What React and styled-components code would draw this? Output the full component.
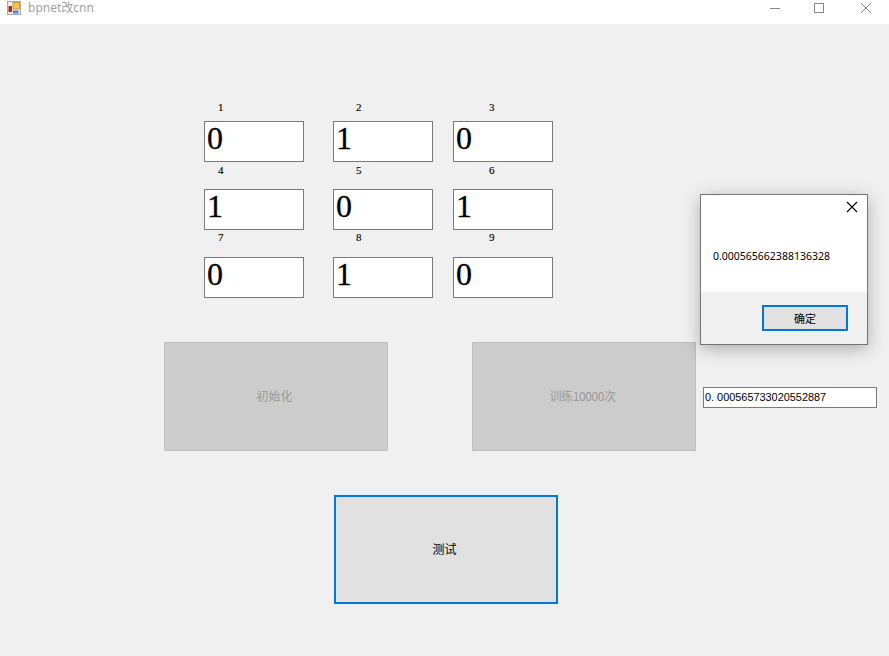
import React from "react";
import styled, { createGlobalStyle } from "styled-components";

const Global = createGlobalStyle`
  html, body { margin: 0; padding: 0; background: #f0f0f0; }
  #root { width: 889px; height: 656px; overflow: hidden; }
`;

const cjk = `"Noto Sans CJK SC", "Liberation Sans", sans-serif`;

const Window = styled.div`
  position: relative;
  width: 889px;
  height: 656px;
  background: #f0f0f0;
  display: flex;
  flex-direction: column;
`;

const TitleBar = styled.header`
  height: 24px;
  flex: none;
  background: #fff;
  display: flex;
  align-items: flex-start;
  padding-left: 7px;
  box-sizing: border-box;
`;

const TitleText = styled.span`
  margin-left: 7px;
  font: 12px/16px "Noto Sans", "Noto Sans CJK SC", sans-serif;
  color: #a3a3a3;
`;

const WinControls = styled.div`
  margin-left: auto;
  display: flex;
  padding: 2px 17px 0 0;
  gap: 35px;
`;

const MinimizeIcon = styled.svg`
  margin-right: -3px;
`;

const Client = styled.main`
  flex: 1;
  display: flex;
  flex-direction: column;
  padding-top: 70px;
`;

const NumGrid = styled.div`
  display: grid;
  grid-template-columns: 129px 120px 100px;
  grid-auto-rows: 68px;
  margin-left: 204px;
  width: 349px;
`;

const Cell = styled.div`
  display: flex;
  flex-direction: column;
  justify-content: flex-end;
  height: 68px;
`;

const CellLabel = styled.span`
  font: 11px/12px "Liberation Serif", serif;
  color: #000;
  -webkit-text-stroke: 0.15px #000;
  padding-left: ${(p) => p.$indent}px;
  margin-bottom: ${(p) => p.$gap}px;
`;

const DigitField = styled.div`
  width: 100px;
  height: 41px;
  box-sizing: border-box;
  flex: none;
  border: 1px solid #7a7a7a;
  background: #fff;
  font: 32px/33px "Liberation Serif", serif;
  -webkit-text-stroke: 0.3px #000;
  color: #000;
  padding-left: 2px;
`;

const ActionRow = styled.div`
  display: flex;
  align-items: center;
  margin: 44px 0 0 164px;
`;

const ActionButton = styled.div`
  width: 224px;
  height: 109px;
  box-sizing: border-box;
  flex: none;
  display: flex;
  align-items: center;
  justify-content: center;
  padding: 0 3px 2px 0;
  font: 12px/14px ${cjk};
  border: ${(p) => (p.$focused ? "2px solid #0078d7" : "1px solid #bfbfbf")};
  background: ${(p) => (p.$focused ? "#e1e1e1" : "#cccccc")};
  color: ${(p) => (p.$focused ? "#000" : "#9a9a9a")};
`;

const TrainButton = styled(ActionButton)`
  margin-left: 84px;
  letter-spacing: -0.4px;
`;

const ResultField = styled.div`
  margin: 1px 0 0 7px;
  width: 174px;
  height: 21px;
  box-sizing: border-box;
  border: 1px solid #7a7a7a;
  background: #fff;
  font: 10.9px/18px "Liberation Sans", sans-serif;
  color: #000;
  padding-left: 1px;
  white-space: pre;
`;

const TestButton = styled(ActionButton)`
  margin: 44px 0 0 334px;
`;

const Dialog = styled.div`
  position: absolute;
  left: 700px;
  top: 194px;
  width: 168px;
  height: 151px;
  box-sizing: border-box;
  border: 1px solid #747474;
  background: #f0f0f0;
  box-shadow: 0 4px 16px rgba(0, 0, 0, 0.28);
  display: flex;
  flex-direction: column;
`;

const DialogBody = styled.div`
  position: relative;
  height: 97px;
  flex: none;
  background: #fff;
  box-sizing: border-box;
  padding: 54px 0 0 12px;
  font: 10.5px/14px "Noto Sans", sans-serif;
  color: #000;
`;

const DialogClose = styled.svg`
  position: absolute;
  top: 6px;
  right: 9px;
`;

const DialogFooter = styled.div`
  flex: 1;
  display: flex;
  justify-content: flex-end;
  padding: 13px 19px 0 0;
`;

const OkButton = styled.div`
  width: 86px;
  height: 26px;
  box-sizing: border-box;
  border: 2px solid #0078d7;
  background: #e1e1e1;
  font: 11px/22px ${cjk};
  color: #000;
  text-align: center;
`;

const AppIcon = () => (
  <svg width="14" height="14" viewBox="0 0 14 14" style={{ marginTop: 1 }}>
    <rect x="0.5" y="0.5" width="13" height="13" fill="#ececec" stroke="#a8a8a8" />
    <rect x="6" y="1.5" width="6.5" height="6.5" fill="#f5c542" stroke="#c08a10" strokeWidth="0.7" />
    <rect x="1.5" y="5" width="3.5" height="6" fill="#c8201c" />
    <rect x="6" y="9.5" width="5.5" height="3" fill="#4a86d8" />
  </svg>
);

const digits = ["0", "1", "0", "1", "0", "1", "0", "1", "0"];
const indents = [14, 23, 36];
const gaps = [8, 13, 14];

export default function App() {
  return (
    <Window>
      <Global />
      <TitleBar>
        <AppIcon />
        <TitleText>bpnet改cnn</TitleText>
        <WinControls>
          <MinimizeIcon width="12" height="12" viewBox="0 0 12 12">
            <path d="M1 6.5H11" stroke="#8a8a8a" fill="none" />
          </MinimizeIcon>
          <svg width="12" height="12" viewBox="0 0 12 12">
            <rect x="1.5" y="1.5" width="9" height="9" stroke="#8a8a8a" fill="none" />
          </svg>
          <svg width="12" height="12" viewBox="0 0 12 12">
            <path d="M1 1L11 11M11 1L1 11" stroke="#8a8a8a" fill="none" />
          </svg>
        </WinControls>
      </TitleBar>
      <Client>
        <NumGrid>
          {digits.map((d, i) => (
            <Cell key={i}>
              <CellLabel $indent={indents[i % 3]} $gap={gaps[Math.floor(i / 3)]}>
                {i + 1}
              </CellLabel>
              <DigitField>{d}</DigitField>
            </Cell>
          ))}
        </NumGrid>
        <ActionRow>
          <ActionButton>初始化</ActionButton>
          <TrainButton>训练10000次</TrainButton>
          <ResultField>0. 000565733020552887</ResultField>
        </ActionRow>
        <TestButton $focused>测试</TestButton>
      </Client>
      <Dialog>
        <DialogBody>
          0.000565662388136328
          <DialogClose width="12" height="12" viewBox="0 0 12 12">
            <path d="M1 1L11 11M11 1L1 11" stroke="#000" strokeWidth="1.1" fill="none" />
          </DialogClose>
        </DialogBody>
        <DialogFooter>
          <OkButton>确定</OkButton>
        </DialogFooter>
      </Dialog>
    </Window>
  );
}
